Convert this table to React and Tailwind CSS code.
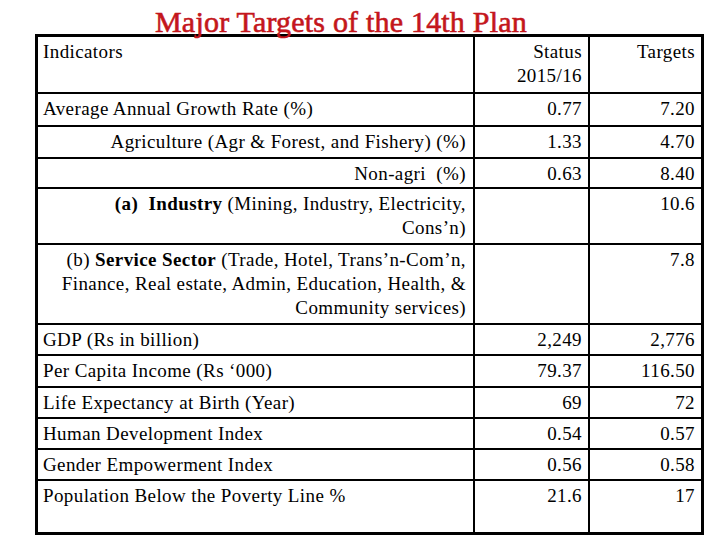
const rows = [
  { label: 'Average Annual Growth Rate (%)', status: '0.77', target: '7.20', h: 'h-[33px]' },
  { label: 'Agriculture (Agr & Forest, and Fishery) (%)', status: '1.33', target: '4.70', h: 'h-[32px]', right: true },
  { label: 'Non-agri  (%)', status: '0.63', target: '8.40', h: 'h-[30px]', right: true },
  {
    label: (
      <>
        <b>(a)&nbsp; Industry</b> (Mining, Industry, Electricity,
        <br />
        Cons’n)
      </>
    ),
    status: '',
    target: '10.6',
    h: 'h-[56px]',
    right: true,
  },
  {
    label: (
      <>
        (b) <b>Service Sector</b> (Trade, Hotel, Trans’n-Com’n,
        <br />
        Finance, Real estate, Admin, Education, Health, &amp;
        <br />
        Community services)
      </>
    ),
    status: '',
    target: '7.8',
    h: 'h-[80px]',
    right: true,
  },
  { label: 'GDP (Rs in billion)', status: '2,249', target: '2,776', h: 'h-[31px]' },
  { label: 'Per Capita Income (Rs ‘000)', status: '79.37', target: '116.50', h: 'h-[32px]' },
  { label: 'Life Expectancy at Birth (Year)', status: '69', target: '72', h: 'h-[31px]' },
  { label: 'Human Development Index', status: '0.54', target: '0.57', h: 'h-[31px]' },
  { label: 'Gender Empowerment Index', status: '0.56', target: '0.58', h: 'h-[31px]' },
  { label: 'Population Below the Poverty Line %', status: '21.6', target: '17', h: 'h-[53px]' },
];

const Row = ({ row }) => (
  <div className={`grid grid-cols-[435px_115px_113px] border-t-2 border-black ${row.h}`}>
    <div className={`pt-[3px] whitespace-pre ${row.right ? 'text-right pr-[7px]' : 'pl-[5px]'}`}>
      {row.label}
    </div>
    <div className="border-l-2 border-black pt-[3px] pr-[6px] text-right">{row.status}</div>
    <div className="border-l-2 border-black pt-[3px] pr-[6px] text-right">{row.target}</div>
  </div>
);

const App = () => {
  return (
    <div className="w-[720px] h-[540px] bg-white overflow-hidden">
      <div className="relative z-10 h-[34px] pl-[155px] pt-[7px]">
        <h1 className="font-['Liberation_Serif',serif] text-[30px] leading-[30px] tracking-[0.2px] text-[#c4161c] whitespace-nowrap [-webkit-text-stroke:0.6px_#c4161c]">
          Major Targets of the 14th Plan
        </h1>
      </div>

      <div className="ml-[35px] w-[669px] border-[3px] border-black font-['Liberation_Serif',serif] text-[19px] leading-[24px] tracking-[0.4px] text-black">
        <div className="grid grid-cols-[435px_115px_113px] h-[55px]">
          <div className="pt-[3px] pl-[5px]">Indicators</div>
          <div className="border-l-2 border-black pt-[3px] pr-[6px] text-right">
            Status
            <br />
            2015/16
          </div>
          <div className="border-l-2 border-black pt-[3px] pr-[6px] text-right">Targets</div>
        </div>
        {rows.map((row, i) => (
          <Row key={i} row={row} />
        ))}
      </div>
    </div>
  );
};

export default App;
